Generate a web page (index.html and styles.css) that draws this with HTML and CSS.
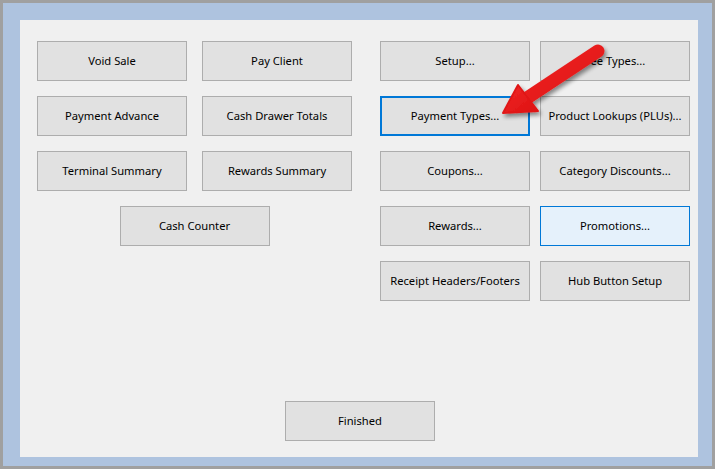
FILE: index.html
```html
<!DOCTYPE html>
<html>
<head>
<meta charset="utf-8">
<link rel="stylesheet" href="styles.css">
</head>
<body>
<div class="frame">
  <div class="panel">
    <div class="groups">
      <div class="grid left">
        <button class="btn">Void Sale</button>
        <button class="btn">Pay Client</button>
        <button class="btn">Payment Advance</button>
        <button class="btn">Cash Drawer Totals</button>
        <button class="btn">Terminal Summary</button>
        <button class="btn">Rewards Summary</button>
        <button class="btn span">Cash Counter</button>
      </div>
      <div class="grid right">
        <button class="btn">Setup...</button>
        <button class="btn">Fee Types...</button>
        <button class="btn focus">Payment Types...</button>
        <button class="btn">Product Lookups (PLUs)...</button>
        <button class="btn">Coupons...</button>
        <button class="btn">Category Discounts...</button>
        <button class="btn">Rewards...</button>
        <button class="btn hover">Promotions...</button>
        <button class="btn">Receipt Headers/Footers</button>
        <button class="btn">Hub Button Setup</button>
      </div>
    </div>
    <div class="footer">
      <button class="btn">Finished</button>
    </div>
  </div>
  <svg class="arrow" width="715" height="469" viewBox="0 0 715 469">
    <defs>
      <filter id="sh" x="-20%" y="-20%" width="140%" height="140%">
        <feGaussianBlur in="SourceAlpha" stdDeviation="2"/>
        <feOffset dx="2" dy="3" result="b"/>
        <feComponentTransfer><feFuncA type="linear" slope="0.45"/></feComponentTransfer>
        <feMerge><feMergeNode/><feMergeNode in="SourceGraphic"/></feMerge>
      </filter>
      <linearGradient id="rg" x1="0" y1="0" x2="1" y2="1">
        <stop offset="0" stop-color="#f22a2a"/>
        <stop offset="1" stop-color="#dc0f0f"/>
      </linearGradient>
    </defs>
    <g filter="url(#sh)">
      <line x1="598" y1="51" x2="524" y2="100" stroke="url(#rg)" stroke-width="13" stroke-linecap="round"/>
      <polygon points="503,113 518,85 538,111" fill="url(#rg)" stroke="#e01818" stroke-width="2" stroke-linejoin="round"/>
    </g>
  </svg>
</div>
</body>
</html>
```
FILE: styles.css
```css
html, body {
  margin: 0;
  padding: 0;
}
body {
  width: 715px;
  height: 469px;
  overflow: hidden;
  font-family: "Noto Sans", "Open Sans", sans-serif;
}
.frame {
  position: relative;
  box-sizing: border-box;
  width: 715px;
  height: 469px;
  border: 3px solid #a0a0a0;
  background: #aec3df;
  padding: 17px 14px 9px 17px;
}
.panel {
  box-sizing: border-box;
  width: 678px;
  height: 437px;
  background: #f0f0f0;
  display: flex;
  flex-direction: column;
}
.groups {
  display: flex;
  padding: 21px 0 0 17px;
  gap: 28px;
}
.grid {
  display: grid;
  grid-template-columns: 150px 150px;
  grid-auto-rows: 40px;
  row-gap: 15px;
}
.left { column-gap: 15px; }
.right { column-gap: 10px; }
.span {
  grid-column: 1 / span 2;
  justify-self: center;
  width: 150px;
}
.btn {
  box-sizing: border-box;
  width: 150px;
  height: 40px;
  margin: 0;
  padding: 0 0 2px 0;
  background: #e1e1e1;
  border: 1px solid #adadad;
  border-radius: 0;
  font-family: "Noto Sans", "Open Sans", sans-serif;
  font-size: 11.2px;
  color: #000;
  white-space: nowrap;
}
.focus {
  border: 2px solid #0078d7;
}
.hover {
  background: #e5f1fb;
  border-color: #0078d7;
}
.footer {
  margin-top: auto;
  display: flex;
  justify-content: center;
  padding: 0 0 16px 2px;
}
.arrow {
  position: absolute;
  left: -3px;
  top: -3px;
  pointer-events: none;
}
```
